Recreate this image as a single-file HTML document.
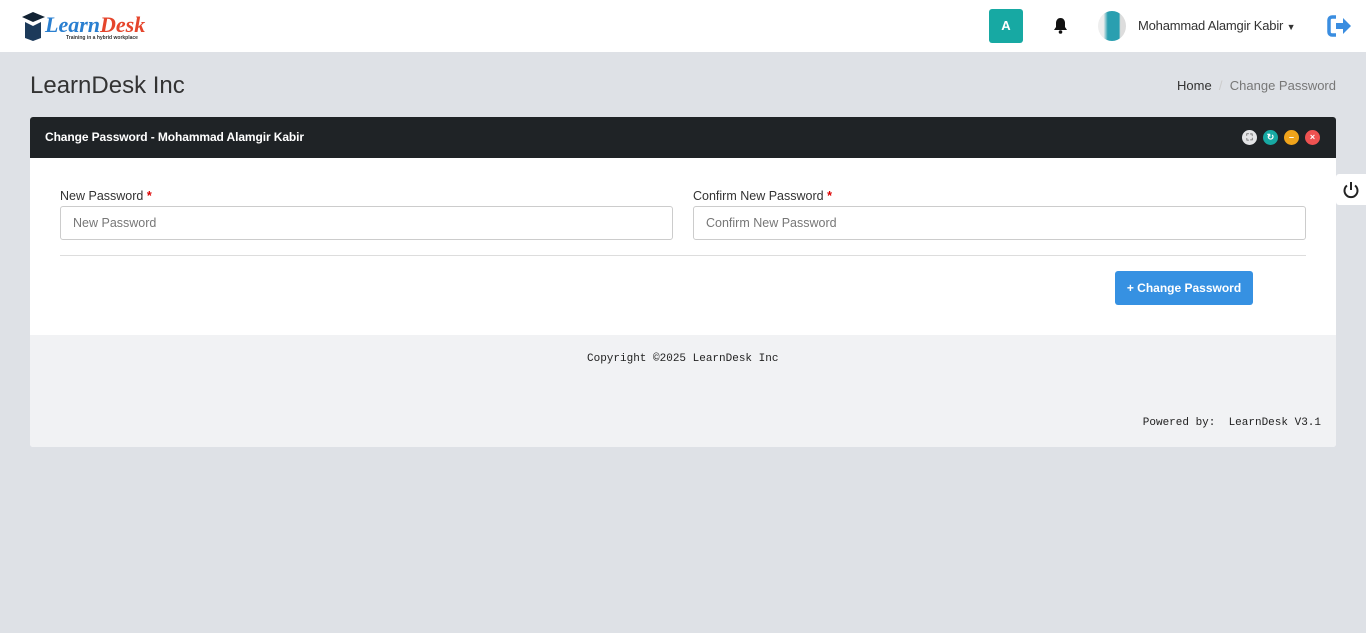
<!DOCTYPE html>
<html><head><meta charset="utf-8"><style>
*{box-sizing:border-box;margin:0;padding:0}
body{width:1366px;height:633px;background:#dee1e6;font-family:"Liberation Sans",sans-serif;position:relative;overflow:hidden;color:#333}
.top{position:absolute;left:0;top:0;width:1366px;height:52px;background:#fff}
.ab{position:absolute;left:989px;top:9px;width:34px;height:34px;background:#17a9a3;border-radius:3px;color:#fff;font-size:13px;font-weight:bold;text-align:center;line-height:34px}
.av{position:absolute;left:1098px;top:11px;width:28px;height:30px;border-radius:50%;background:linear-gradient(90deg,#eee 20%,#2a9fb0 35%,#2a9fb0 75%,#ddd 80%)}
.name{position:absolute;left:1138px;top:18px;font-size:13px;color:#333;letter-spacing:-0.2px}
h1{position:absolute;left:30px;top:72px;font-size:24px;font-weight:normal;color:#333}
.bc{position:absolute;right:30px;top:78px;font-size:13px;color:#333}
.bc span{color:#777}
.panel{position:absolute;left:30px;top:117px;width:1306px;height:330px;background:#fff;border-radius:3px;overflow:hidden}
.ph{height:41px;background:#1f2326;color:#fff;font-size:12px;font-weight:bold;padding:13px 15px;letter-spacing:-0.1px}
.dot{position:absolute;top:13px;width:15px;height:15px;border-radius:50%;color:#fff;font-size:9px;text-align:center;line-height:15px;font-weight:bold}
label{position:absolute;font-size:12.5px;color:#333}
label b{color:#d00}
.in{position:absolute;height:34px;border:1px solid #ccc;border-radius:3px;font-size:12.5px;color:#777;padding:9px 12px}
.btn{position:absolute;left:1085px;top:154px;width:138px;height:34px;background:#3691e2;color:#fff;border-radius:3px;font-size:12px;font-weight:bold;text-align:center;line-height:34px}
.foot{position:absolute;left:0;top:218px;width:1306px;height:112px;background:#f1f2f4;font-family:"Liberation Mono",monospace;font-size:11px;color:#222}
</style></head><body>
<div class="top">
<svg style="position:absolute;left:20px;top:10px" width="132" height="34"><path d="M2 7 L13 2 L25 7 L13 12Z" fill="#123"/><path d="M5 12 L13 16 L21 12 L21 28 L13 31 L5 28Z" fill="#1c3a5a"/><text x="25" y="22" font-family="Liberation Serif" font-style="italic" font-weight="bold" font-size="22" fill="#2a7fd0">Learn</text><text x="80" y="22" font-family="Liberation Serif" font-style="italic" font-weight="bold" font-size="22" fill="#e5452c">Desk</text><text x="46" y="29" font-size="5" font-weight="bold" fill="#333">Training in a hybrid workplace</text></svg>
<div class="ab">A</div>
<svg style="position:absolute;left:1053px;top:17px" width="15" height="17" viewBox="0 0 15 17"><path d="M7.5 1C4.5 1 3 3.5 3 6v4l-2 3h13l-2-3V6c0-2.5-1.5-5-4.5-5z" fill="#111"/><circle cx="7.5" cy="15" r="1.8" fill="#111"/></svg>
<div class="av"></div>
<div class="name">Mohammad Alamgir Kabir <span style="font-size:9px">▼</span></div>
<svg style="position:absolute;left:1327px;top:14px" width="26" height="24" viewBox="0 0 26 24"><path d="M9 3H5a3 3 0 0 0-3 3v12a3 3 0 0 0 3 3h4" stroke="#3a8de0" stroke-width="3.5" fill="none"/><path d="M9 9h7V4l8 8-8 8v-5H9z" fill="#3a8de0"/></svg>
</div>
<h1>LearnDesk Inc</h1>
<div class="bc">Home &nbsp;<span style="color:#ccc">/</span>&nbsp; <span>Change Password</span></div>
<div class="panel">
<div class="ph">Change Password - Mohammad Alamgir Kabir</div>
<div class="dot" style="left:1212px;background:#e3e4e6;color:#666">⛶</div>
<div class="dot" style="left:1233px;background:#17a9a3">↻</div>
<div class="dot" style="left:1254px;background:#f0a41b">–</div>
<div class="dot" style="left:1275px;background:#ee5251">×</div>
<label style="left:30px;top:72px">New Password <b>*</b></label>
<div class="in" style="left:30px;top:89px;width:613px">New Password</div>
<label style="left:663px;top:72px">Confirm New Password <b>*</b></label>
<div class="in" style="left:663px;top:89px;width:613px">Confirm New Password</div>
<div style="position:absolute;left:30px;top:138px;width:1246px;border-top:1px solid #ddd"></div>
<div class="btn">+ Change Password</div>
<div class="foot"><div style="position:absolute;left:557px;top:18px">Copyright ©2025 LearnDesk Inc</div><div style="position:absolute;right:15px;top:82px">Powered by:&nbsp; LearnDesk V3.1</div></div>
</div>
<div style="position:absolute;left:1336px;top:174px;width:30px;height:31px;background:#fff;border-radius:3px 0 0 3px"><svg style="position:absolute;left:6px;top:7px" width="18" height="18" viewBox="0 0 18 18"><path d="M5 4.5a6.5 6.5 0 1 0 8 0" stroke="#222" stroke-width="2" fill="none"/><path d="M9 1v8" stroke="#222" stroke-width="2"/></svg></div>
</body></html>
